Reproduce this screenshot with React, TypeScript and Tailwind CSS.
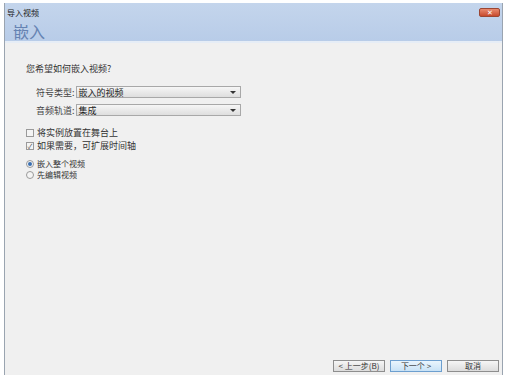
const font = { fontFamily: '"Noto Sans CJK SC", "Liberation Sans", sans-serif' }

function Select({ value }: { value: string }) {
  return (
    <div className="flex h-[12px] w-[165px] items-center justify-between border border-[#a8a8a8] bg-gradient-to-b from-[#f6f6f6] to-[#dedede] pl-[2px] pr-[4px]">
      <span className="text-[9px] leading-none text-[#222]">{value}</span>
      <span className="h-0 w-0 border-x-[3px] border-t-[3px] border-x-transparent border-t-[#333]" />
    </div>
  )
}

function Check({ checked, label }: { checked?: boolean; label: string }) {
  return (
    <div className="flex h-[10px] items-center gap-[3px]">
      <span className="flex h-[8px] w-[8px] items-center justify-center border border-[#9a9a9a] bg-[#f4f4f4] text-[7px] leading-none text-[#555]">
        {checked ? '✓' : ''}
      </span>
      <span className="text-[9px] leading-[10px] text-[#333]">{label}</span>
    </div>
  )
}

function Radio({ checked, label }: { checked?: boolean; label: string }) {
  return (
    <div className="flex h-[11px] items-center gap-[3px]">
      <span className="flex h-[8px] w-[8px] items-center justify-center rounded-full border border-[#9a9a9a] bg-[#f4f4f4]">
        {checked && <span className="h-[4px] w-[4px] rounded-full bg-[#3a6fb0]" />}
      </span>
      <span className="text-[8px] leading-[11px] text-[#333]">{label}</span>
    </div>
  )
}

function Btn({ label, active }: { label: string; active?: boolean }) {
  return (
    <div
      className={
        active
          ? 'flex h-[12px] w-[52px] items-center justify-center border border-[#6d9fcf] bg-gradient-to-b from-[#eaf5fd] to-[#c8e2f6] text-[8px] leading-none text-[#333]'
          : 'flex h-[12px] w-[52px] items-center justify-center border border-[#8e8e8e] bg-gradient-to-b from-[#f6f6f6] to-[#dcdcdc] text-[8px] leading-none text-[#333]'
      }
    >
      {label}
    </div>
  )
}

export default function App() {
  return (
    <div className="h-[375px] w-[511px] overflow-hidden bg-white pt-[3px] pl-[4px]" style={font}>
      <div className="flex h-[372px] w-[499px] flex-col border-x border-[#9aa4b0] bg-[#f0f0f0]">
        {/* Title bar + header */}
        <div className="flex h-[38px] flex-col bg-gradient-to-b from-[#c4d5ec] to-[#b8cce8]">
          <div className="flex items-center justify-between pl-[2px] pr-[2px] pt-[5px]">
            <span className="text-[8px] leading-none text-[#1a1a1a]">导入视频</span>
            <span className="flex h-[9px] w-[21px] items-center justify-center rounded-[2px] border border-[#9b4633] bg-gradient-to-b from-[#e8896e] to-[#c7492c] text-[7px] leading-none text-white">
              ✕
            </span>
          </div>
          <div className="pl-[8px] pt-[6px] text-[16px] leading-none text-[#6683b2]">嵌入</div>
        </div>
        <div className="h-[2px] bg-[#e6edf6]" />

        {/* Content */}
        <div className="flex flex-1 flex-col pl-[21px] pt-[21px]">
          <span className="text-[9px] leading-none text-[#333]">您希望如何嵌入视频?</span>

          <div className="mt-[13px] flex flex-col gap-[6px] pl-[10px]">
            <div className="flex items-center gap-[1px]">
              <span className="text-[9px] leading-none text-[#444]">符号类型:</span>
              <Select value="嵌入的视频" />
            </div>
            <div className="flex items-center gap-[1px]">
              <span className="text-[9px] leading-none text-[#444]">音频轨道:</span>
              <Select value="集成" />
            </div>
          </div>

          <div className="mt-[12px] flex flex-col gap-[3px]">
            <Check label="将实例放置在舞台上" />
            <Check checked label="如果需要，可扩展时间轴" />
          </div>

          <div className="mt-[7px] flex flex-col">
            <Radio checked label="嵌入整个视频" />
            <Radio label="先编辑视频" />
          </div>

          <div className="mt-auto mb-[3px] flex justify-end gap-[5px] pr-[3px]">
            <Btn label="< 上一步(B)" />
            <Btn active label="下一个 >" />
            <Btn label="取消" />
          </div>
        </div>
      </div>
    </div>
  )
}
